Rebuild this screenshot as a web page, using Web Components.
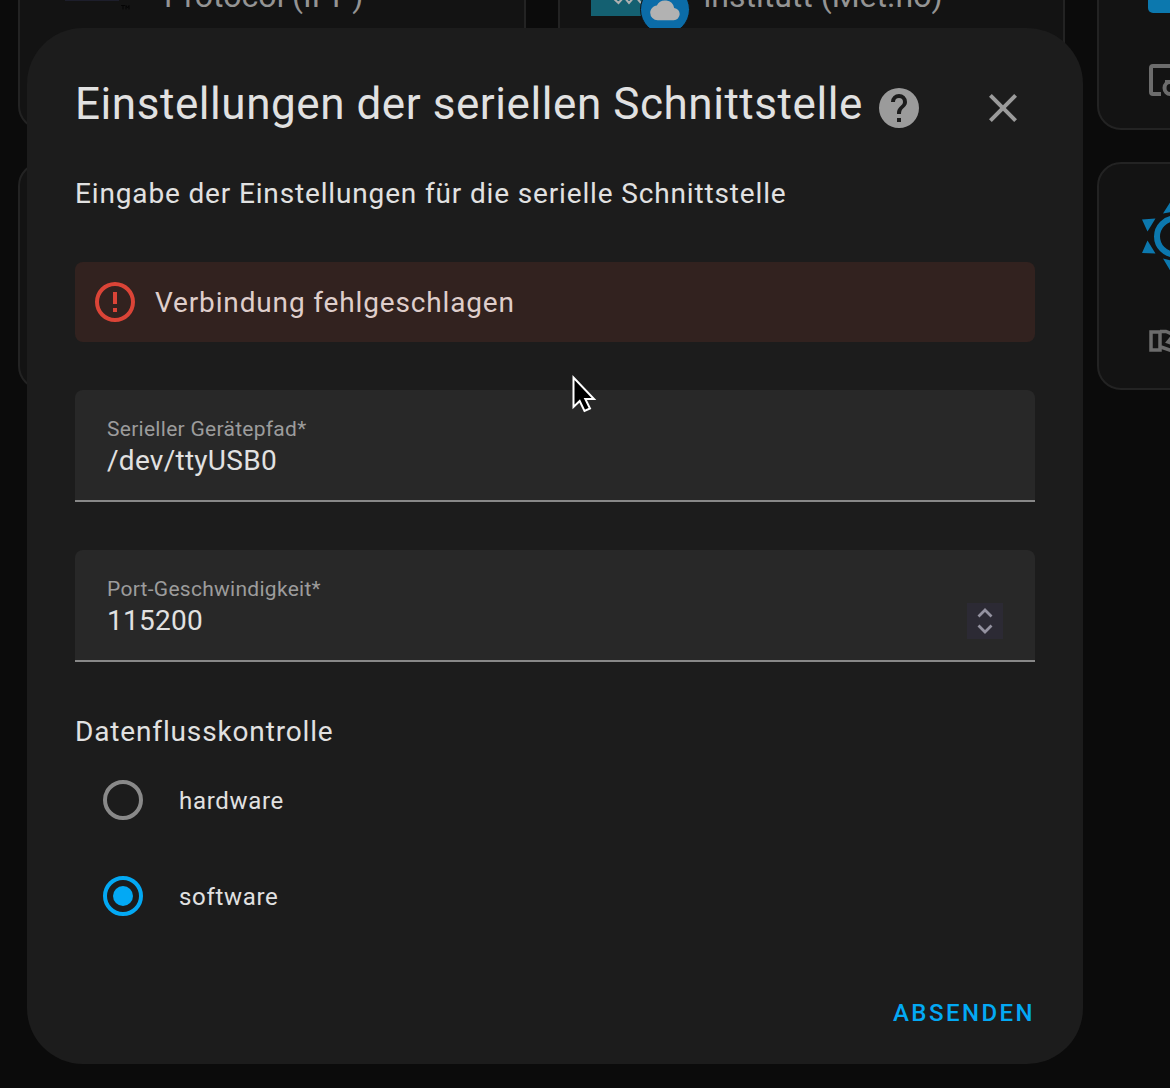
<!DOCTYPE html>
<html lang="de">
<head>
<meta charset="utf-8">
<title>Einstellungen der seriellen Schnittstelle</title>
<style>
  html, body {
    margin: 0;
    height: 100%;
    overflow: hidden;
    background: #0b0b0b;
    color: #e1e1e1;
    font-family: Roboto, sans-serif;
    --primary: #03a9f4;
    --secondary: #9b9b9b;
    --surface: #1c1c1c;
    --field: #282828;
    --error: #db4437;
  }
  svg { display: block; }
  .low { margin-top: 12px; }
</style>
</head>
<body>
<integration-grid>
  <integration-card>
    <svg slot="logo" class="low" width="80" height="80" viewBox="0 0 80 80" overflow="visible">
      <path fill="#1d1e2b" d="M14 10H68V55H14Z"/>
      <path d="M70 59.500H74M72 59.500V63.500M75 63.500V59.500L76.500 62L78 59.500V63.500" fill="none" stroke="#050505"/>
    </svg>
    Protocol (IPP)
  </integration-card>
  <integration-card>
    <svg slot="logo" class="low" width="80" height="80" viewBox="0 0 80 80" overflow="visible">
      <path fill="#146071" d="M0 0H80V70H0Z"/>
      <path d="M22 52L27.500 57L33 51L38 57L44 50L50 57" fill="none" stroke="#b0b0b0" stroke-width="2"/>
      <circle cx="74" cy="63.500" r="24.500" fill="#0b6ca8" stroke="#131313"/>
      <path transform="translate(59.200 49.500) scale(1.240)" fill="#b2b2b2" d="M6 20A6 6 0 0 1 0 14C0 10.910 2.340 8.360 5.350 8.040A7.490 7.490 0 0 1 19.350 10.040A5 5 0 0 1 19 20H6Z"/>
    </svg>
    institutt (Met.no)
  </integration-card>
  <integration-card>
    <svg slot="logo" class="low" width="80" height="80" viewBox="0 0 80 80">
      <rect x="18" y="-10" width="80" height="77" rx="5" fill="#0c78ae"/>
    </svg>
    <svg slot="action" width="48" height="48" viewBox="0 0 48 48" overflow="visible">
      <path d="M40 9H10Q8 9 8 11V35Q8 37 10 37H18" fill="none" stroke="#6c6c6c" stroke-width="4"/>
      <circle cx="27.500" cy="31" r="6" fill="none" stroke="#6c6c6c" stroke-width="4"/>
      <path d="M22 23H32V27H22Z" fill="#6c6c6c"/>
    </svg>
  </integration-card>
  <integration-card></integration-card>
  <integration-card></integration-card>
  <integration-card>
    <svg slot="logo" width="80" height="80" viewBox="0 0 80 80" overflow="visible">
      <g fill="#0c78ae" transform="translate(1 .500)">
        <path d="M11 25L24.500 24L16.500 37ZM16.500 46L24.500 59L11 58.500ZM32 19L44 0V17ZM32 64L44 84V67Z"/>
        <circle cx="44" cy="42" r="18" fill="none" stroke="#0c78ae" stroke-width="6"/>
      </g>
    </svg>
    <svg slot="action" width="48" height="48" viewBox="0 0 48 48" overflow="visible">
      <path d="M8 15H17V33H8ZM17 14.500H23L34 19M18 30L32 35M29 20L25 25L31 27" fill="none" stroke="#6c6c6c" stroke-width="3.500"/>
    </svg>
  </integration-card>
</integration-grid>

<serial-dialog>
  <span slot="title">Einstellungen der seriellen Schnittstelle</span>
  <span slot="intro">Eingabe der Einstellungen für die serielle Schnittstelle</span>
  <error-alert>Verbindung fehlgeschlagen</error-alert>
  <text-field label="Serieller Gerätepfad*" value="/dev/ttyUSB0"></text-field>
  <text-field label="Port-Geschwindigkeit*" value="115200" type="number"></text-field>
  <radio-group label="Datenflusskontrolle">
    <radio-option>hardware</radio-option>
    <radio-option checked>software</radio-option>
  </radio-group>
  <span slot="action">ABSENDEN</span>
</serial-dialog>
<mouse-pointer></mouse-pointer>

<script>
  function define(name, html, setup) {
    customElements.define(name, class extends HTMLElement {
      constructor() {
        super();
        this.attachShadow({mode: 'open'});
        const template = document.createElement('template');
        template.innerHTML = html;
        this.shadowRoot.appendChild(template.content.cloneNode(true));
      }

      connectedCallback() {
        if (setup) setup(this, this.shadowRoot);
      }
    });
  }

  // the third column runs off the right edge
  define('integration-grid', `
    <style>
      :host {
        display: grid;
        grid-template-columns: repeat(3, 507.500px);
        grid-auto-rows: 228px;
        gap: 32px;
        margin: -98px 0 0 18px;
        overflow: hidden;
      }
    </style>
    <slot></slot>
  `);

  define('integration-card', `
    <style>
      :host {
        display: flex;
        flex-direction: column;
        justify-content: space-between;
        box-sizing: border-box;
        border: 2px solid #232323;
        border-radius: 24px;
        background: #131313;
        color: #949494;
        padding: 30px 31px 23px;
        font-size: 32px;
        line-height: 40px;
      }
      .header {
        display: flex;
        gap: 33px;
      }
      .name {
        padding-top: 42px;
      }
      .action {
        margin-left: 13px;
      }
    </style>
    <div class="header">
      <slot name="logo"></slot>
      <div class="name"><slot></slot></div>
    </div>
    <div class="action"><slot name="action"></slot></div>
  `);

  define('serial-dialog', `
    <style>
      :host {
        position: fixed;
        inset: 28px 87px 24px 27px;
        box-sizing: border-box;
        display: flex;
        flex-direction: column;
        padding: 48px;
        border-radius: 56px;
        background: var(--surface);
      }
      header {
        display: flex;
        height: 64px;
        align-items: center;
      }
      h1 {
        margin: 0 12px 8px 0;
        font-size: 44px;
        font-weight: 400;
        line-height: 56px;
        letter-spacing: .560px;
        white-space: nowrap;
      }
      .close {
        margin-left: auto;
        margin-right: 8px;
      }
      svg {
        fill: var(--secondary);
        flex: none;
      }
      .intro {
        margin: 32px 0 47px;
        font-size: 28px;
        line-height: 43px;
        letter-spacing: .850px;
      }
      .content {
        display: flex;
        flex-direction: column;
        gap: 48px;
      }
      footer {
        margin-top: auto;
        text-align: right;
        color: var(--primary);
        font-size: 24px;
        font-weight: 540;
        line-height: 6px;
        letter-spacing: 2.450px;
      }
    </style>
    <header>
      <h1><slot name="title"></slot></h1>
      <svg width="48" height="48" viewBox="0 0 24 24"><path d="M15.070 11.250L14.170 12.170C13.450 12.890 13 13.500 13 15H11V14.500C11 13.390 11.450 12.390 12.170 11.670L13.410 10.410C13.780 10.050 14 9.550 14 9A2 2 0 0 0 10 9H8A4 4 0 0 1 16 9C16 9.880 15.640 10.670 15.070 11.250M13 19H11V17H13M12 2A10 10 0 0 0 12 22A10 10 0 0 0 12 2Z"/></svg>
      <svg class="close" width="48" height="48" viewBox="0 0 24 24"><path d="M19 6.410L17.590 5L12 10.590L6.410 5L5 6.410L10.590 12L5 17.590L6.410 19L12 13.410L17.590 19L19 17.590L13.410 12Z"/></svg>
    </header>
    <div class="intro"><slot name="intro"></slot></div>
    <div class="content"><slot></slot></div>
    <footer><slot name="action"></slot></footer>
  `);

  define('error-alert', `
    <style>
      :host {
        display: flex;
        align-items: center;
        gap: 16px;
        height: 80px;
        padding: 0 16px;
        box-sizing: border-box;
        border-radius: 8px;
        background: #32221f;
        color: #dfcecb;
        font-size: 28px;
        letter-spacing: .850px;
      }
      svg { fill: var(--error); }
    </style>
    <svg width="48" height="48" viewBox="0 0 24 24"><path d="M11 15H13V17H11V15M11 7H13V13H11V7M12 2A10 10 0 0 0 12 22A10 10 0 0 0 12 2M12 20A8 8 0 0 1 12 4A8 8 0 0 1 12 20Z"/></svg>
    <span><slot></slot></span>
  `);

  define('text-field', `
    <style>
      :host {
        display: flex;
        align-items: flex-end;
        justify-content: space-between;
        box-sizing: border-box;
        height: 112px;
        padding: 0 32px 21px;
        border-bottom: 2px solid #888;
        border-radius: 8px 8px 0 0;
        background: var(--field);
      }
      .label {
        color: #9c9c9c;
        font-size: 21px;
        line-height: 28px;
        letter-spacing: .280px;
      }
      .value {
        font-size: 28px;
        line-height: 36px;
        letter-spacing: .270px;
      }
      .spinner {
        background: #2c2a34;
      }
    </style>
    <div>
      <div class="label"></div>
      <div class="value"></div>
    </div>
    <svg class="spinner" width="36" height="36" viewBox="0 0 36 36" fill="none" stroke="#9492a0" stroke-width="2.800"><path d="M11.500 13.500L18 7L24.500 13.500M11.500 22.500L18 29L24.500 22.500"/></svg>
  `, (el, root) => {
    root.querySelector('.label').textContent = el.getAttribute('label');
    root.querySelector('.value').textContent = el.getAttribute('value');
    if (el.getAttribute('type') !== 'number') root.querySelector('.spinner').remove();
  });

  define('radio-group', `
    <style>
      :host { display: block; }
      .label {
        padding-top: 2px;
        font-size: 28px;
        line-height: 40px;
        letter-spacing: .850px;
      }
    </style>
    <div class="label"></div>
    <slot></slot>
  `, (el, root) => {
    root.querySelector('.label').textContent = el.getAttribute('label');
  });

  define('radio-option', `
    <style>
      :host {
        display: flex;
        align-items: center;
        gap: 36px;
        height: 96px;
        padding-left: 28px;
        font-size: 24px;
        letter-spacing: .680px;
      }
      .circle {
        display: grid;
        place-items: center;
        box-sizing: border-box;
        width: 40px;
        height: 40px;
        border: 4px solid #898989;
        border-radius: 50%;
      }
      .text { padding-top: 2px; }
      :host([checked]) .circle { border-color: var(--primary); }
      :host([checked]) .circle::after {
        content: '';
        width: 20px;
        height: 20px;
        border-radius: 50%;
        background: var(--primary);
      }
    </style>
    <div class="circle"></div>
    <span class="text"><slot></slot></span>
  `);

  define('mouse-pointer', `
    <style>
      :host {
        position: fixed;
        left: 570px;
        top: 372px;
      }
    </style>
    <svg width="30" height="44" viewBox="0 0 30 44"><path d="M3.500 5.500V35L9.700 29L14.500 39L20 36.500L15.300 27H24Z" stroke="#fff" stroke-width="2"/></svg>
  `);
</script>
</body>
</html>
